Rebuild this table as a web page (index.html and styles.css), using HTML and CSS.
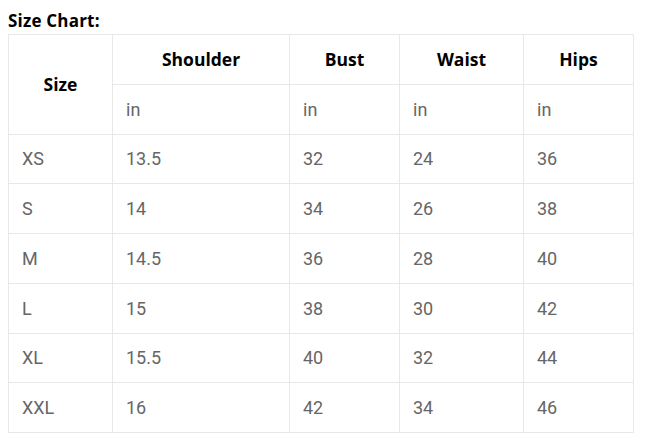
FILE: index.html
```html
<!DOCTYPE html>
<html>
<head>
<meta charset="utf-8">
<link rel="stylesheet" href="styles.css">
</head>
<body>
<div class="title">Size Chart:</div>
<table class="chart">
  <colgroup>
    <col class="c1"><col class="c2"><col class="c3"><col class="c4"><col class="c5">
  </colgroup>
  <thead>
    <tr><th rowspan="2">Size</th><th>Shoulder</th><th>Bust</th><th>Waist</th><th>Hips</th></tr>
    <tr><td>in</td><td>in</td><td>in</td><td>in</td></tr>
  </thead>
  <tbody>
    <tr><td>XS</td><td>13.5</td><td>32</td><td>24</td><td>36</td></tr>
    <tr><td>S</td><td>14</td><td>34</td><td>26</td><td>38</td></tr>
    <tr><td>M</td><td>14.5</td><td>36</td><td>28</td><td>40</td></tr>
    <tr><td>L</td><td>15</td><td>38</td><td>30</td><td>42</td></tr>
    <tr><td>XL</td><td>15.5</td><td>40</td><td>32</td><td>44</td></tr>
    <tr><td>XXL</td><td>16</td><td>42</td><td>34</td><td>46</td></tr>
  </tbody>
</table>
</body>
</html>
```
FILE: styles.css
```css
body {
  margin: 8px;
  background: #fff;
  font-family: "Open Sans", "Noto Sans", sans-serif;
}
.title {
  font-weight: 700;
  font-size: 17px;
  line-height: 26px;
  letter-spacing: 0.2px;
  color: #000;
}
.chart {
  border-collapse: collapse;
  table-layout: fixed;
  width: 625px;
}
.c1 { width: 104px; }
.c2 { width: 177px; }
.c3 { width: 110px; }
.c4 { width: 124px; }
.c5 { width: 110px; }
.chart th, .chart td {
  border: 1px solid #e8e8e8;
  height: 49.75px;
  padding: 0 13px;
  box-sizing: border-box;
}
.chart th {
  font-weight: 700;
  font-size: 17.5px;
  color: #000;
  text-align: center;
}
.chart td {
  color: #666;
  text-align: left;
  font-family: "Roboto", sans-serif;
  font-size: 18px;
}
```
